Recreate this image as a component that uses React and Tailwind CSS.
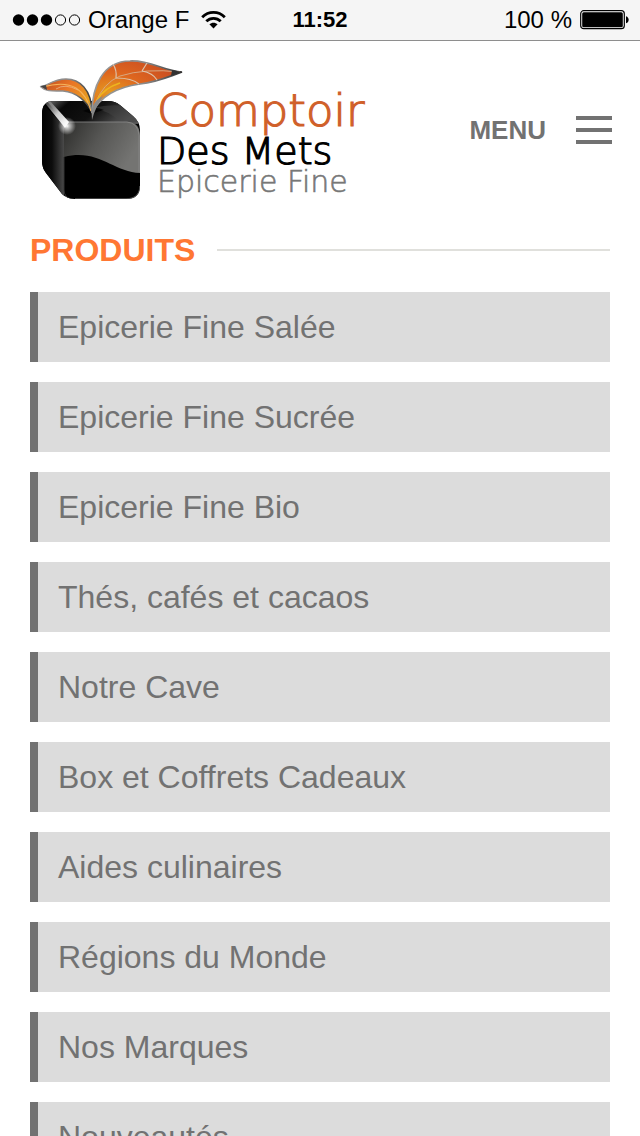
const categories = [
  "Epicerie Fine Salée",
  "Epicerie Fine Sucrée",
  "Epicerie Fine Bio",
  "Thés, cafés et cacaos",
  "Notre Cave",
  "Box et Coffrets Cadeaux",
  "Aides culinaires",
  "Régions du Monde",
  "Nos Marques",
  "Nouveautés",
];

function StatusBar() {
  return (
    <div className="grid h-[41px] grid-cols-3 items-center border-b border-[#8e8e8e] bg-[#f5f5f5] px-3 text-2xl text-black">
      <div className="flex items-center gap-2 whitespace-nowrap">
        <svg className="shrink-0" width="68" height="12" viewBox="0 0 68 12" aria-hidden="true">
          <circle cx="6.5" cy="6" r="5.7" />
          <circle cx="20.5" cy="6" r="5.7" />
          <circle cx="34.5" cy="6" r="5.7" />
          <circle cx="48.5" cy="6" r="5.1" fill="none" stroke="#000" />
          <circle cx="62.5" cy="6" r="5.1" fill="none" stroke="#000" />
        </svg>
        <span>Orange F</span>
        <svg className="ml-1 shrink-0" width="25" height="18" viewBox="0 0 25 18" fill="none" stroke="#000" aria-hidden="true">
          <path d="M1.2 6.2C7.5-.2 17.5-.2 23.8 6.2" strokeWidth="2.8" />
          <path d="M5.3 10.3c4-4 10.4-4 14.4 0" strokeWidth="2.8" />
          <path d="M8.4 13.3c2.3-2.2 5.9-2.2 8.2 0l-4.1 4.2z" fill="#000" stroke="none" />
        </svg>
      </div>
      <span className="text-center text-[22px] font-bold">11:52</span>
      <div className="flex items-center justify-end gap-2 whitespace-nowrap">
        <span>100 %</span>
        <svg className="-mr-0.5 shrink-0" width="50" height="20" viewBox="0 0 50 20" aria-hidden="true">
          <rect x=".7" y=".7" width="43.6" height="18" rx="3" fill="#fff" stroke="#000" strokeWidth="1.2" />
          <rect x="2.2" y="2.2" width="40.6" height="15" rx="1.5" />
          <path d="M46 6.2c3.6 1 3.6 6 0 7z" />
        </svg>
      </div>
    </div>
  );
}

function Logo() {
  return (
    <svg width="330" height="144" viewBox="0 0 330 144" role="img" aria-label="Comptoir Des Mets, Epicerie Fine">
      <defs>
        <linearGradient id="front" x1="0" y1="0" x2="1" y2=".4">
          <stop offset="0" stopColor="#2c2c2a" />
          <stop offset=".5" stopColor="#565654" />
          <stop offset="1" stopColor="#747472" />
        </linearGradient>
        <linearGradient id="top" x1="0" y1="0" x2="1" y2=".3">
          <stop offset="0" stopColor="#777" />
          <stop offset=".25" stopColor="#080808" />
          <stop offset=".6" stopColor="#111" />
          <stop offset="1" stopColor="#555" />
        </linearGradient>
        <linearGradient id="side" x1="0" y1="0" x2="1" y2="0">
          <stop offset="0" stopColor="#000" />
          <stop offset=".5" stopColor="#0c0c0c" />
          <stop offset="1" stopColor="#4a4a4a" />
        </linearGradient>
        <linearGradient id="edge" x1="0" y1="0" x2="1" y2="1">
          <stop offset="0" stopColor="#999" stopOpacity=".3" />
          <stop offset=".5" stopColor="#ccc" />
          <stop offset="1" stopColor="#fff" />
        </linearGradient>
        <radialGradient id="glow">
          <stop offset="0" stopColor="#fff" />
          <stop offset=".25" stopColor="#fff" stopOpacity=".7" />
          <stop offset="1" stopColor="#fff" stopOpacity="0" />
        </radialGradient>
        <radialGradient id="leafRight" cx=".2" cy=".6" r=".75">
          <stop offset="0" stopColor="#e59a20" />
          <stop offset=".5" stopColor="#de661f" />
          <stop offset="1" stopColor="#cc5020" />
        </radialGradient>
        <linearGradient id="leafLeft" x1="0" y1="0" x2="1" y2=".6">
          <stop offset="0" stopColor="#b94a20" />
          <stop offset=".5" stopColor="#ea7526" />
          <stop offset="1" stopColor="#e6a41e" />
        </linearGradient>
        <linearGradient id="rim" x1="0" y1="0" x2="1" y2="0">
          <stop offset="0" stopColor="#999" />
          <stop offset=".6" stopColor="#888" />
          <stop offset="1" stopColor="#333" />
        </linearGradient>
        <clipPath id="cube">
          <path d="M15 43H70Q77 43 82 47L95 58Q102 64 102 72V128Q102 141 88 141H37Q29 141 24 136L8 115Q4 110 4 103V56Q4 43 15 43Z" />
        </clipPath>
      </defs>

      {/* cube */}
      <g clipPath="url(#cube)">
        <rect x="2" y="40" width="102" height="104" fill="#000" />
        <path d="M2 43L26 68V144L2 115Z" fill="url(#side)" />
        <path d="M8 42H76L104 66H28Z" fill="url(#top)" />
        <path d="M54 50Q72 46 86 48L104 64H82Q70 52 54 50Z" fill="#444" opacity=".5" />
        <path d="M26 64H91Q102 65 102 78V115C75 114 60 90 26 99Z" fill="url(#front)" />
        <path d="M29 64H89Q100 65 101 77V114" fill="none" stroke="#8c8c8a" strokeWidth=".8" />
        <path d="M26 99V132Q26 139 33 141" fill="none" stroke="#333" />
        <path d="M7 45L12 43L31 64L27 70Z" fill="url(#edge)" />
        <circle cx="29" cy="68" r="9" fill="url(#glow)" />
        <path d="M37 141H88Q102 141 102 128" fill="none" stroke="#555" strokeWidth="1.4" />
      </g>
      <path d="M45 53Q55 47 66 52Q58 54 54 56Z" fill="#000" opacity=".7" />

      {/* leaves */}
      <path d="M54 55C54 31 41 21 28 21C16 21 10 27 3 29C8 34 16 33 25 33C38 34 49 43 54 55Z" fill="url(#leafLeft)" stroke="url(#rim)" strokeWidth="1.4" />
      <path d="M5 29Q26 23 38 30Q49 37 53 53" fill="none" stroke="#f6b35a" strokeWidth="1.1" />
      <path d="M18 31Q27 25 40 32" fill="none" stroke="#eab489" strokeWidth=".8" />
      <path d="M2 28L8 27L9 32Z" fill="#444" />
      <path d="M54 55C54 30 64 3 92 3C113 2 125 13 144 14C127 20 119 24 102 26C80 29 63 37 54 55Z" fill="url(#leafRight)" stroke="url(#rim)" strokeWidth="1.7" />
      <path d="M57 46Q65 25 82 18Q107 10 142 14" fill="none" stroke="#d8a780" strokeWidth="1" />
      <path d="M75 6Q79 12 78 20M78 20Q94 20 101 26M109 5L104 13M104 13Q115 15 119 22" fill="none" stroke="#dcc3ac" strokeWidth="1.2" />
      <path d="M59 42Q66 30 82 25" fill="none" stroke="#edb51f" strokeWidth="1.8" />
      <path d="M144 14L134 12L133 18Z" fill="#333" />
      <path d="M50 44Q54 50 54 62Q57 50 65 38Q56 42 54 51Q53 46 50 44Z" fill="#888" />

      {/* name */}
      <g fontFamily="'DejaVu Sans', sans-serif" fontWeight="200">
        <text x="119" y="68" fontSize="45" fill="#d0602a" stroke="#d0602a" strokeWidth="1.2">Comptoir</text>
        <text x="119" y="106" fontSize="38" fill="#000" stroke="#000" strokeWidth="1.2">Des Mets</text>
        <text x="119" y="134" fontSize="30" fill="#777" stroke="#777" strokeWidth=".6">Epicerie Fine</text>
      </g>
    </svg>
  );
}

function Header() {
  return (
    <header className="flex items-center justify-between pt-[17px] pr-7 pl-[38px]">
      <a href="#accueil">
        <Logo />
      </a>
      <button type="button" className="flex items-center gap-[30px] text-[26px] font-bold text-[#727272]">
        <span>MENU</span>
        <span className="flex w-9 flex-col gap-2" aria-hidden="true">
          <span className="h-1 bg-[#727272]" />
          <span className="h-1 bg-[#727272]" />
          <span className="h-1 bg-[#727272]" />
        </span>
      </button>
    </header>
  );
}

export default function App() {
  return (
    <div className="min-h-screen bg-white font-['Liberation_Sans',Arial,sans-serif]">
      <StatusBar />
      <Header />
      <main className="px-[30px] pt-7 pb-5">
        <div className="flex items-center gap-[22px]">
          <h1 className="text-[32px] leading-10 font-bold text-[#ff7733]">PRODUITS</h1>
          <span className="h-0.5 flex-1 bg-[#e0e0dc]" />
        </div>
        <nav className="mt-[22px]">
          <ul className="flex flex-col gap-5">
            {categories.map((name) => (
              <li key={name}>
                <a href="#produits" className="block border-l-8 border-[#727272] bg-[#dcdcdc] px-5 text-[32px] leading-[70px] text-[#727272]">
                  {name}
                </a>
              </li>
            ))}
          </ul>
        </nav>
      </main>
    </div>
  );
}
